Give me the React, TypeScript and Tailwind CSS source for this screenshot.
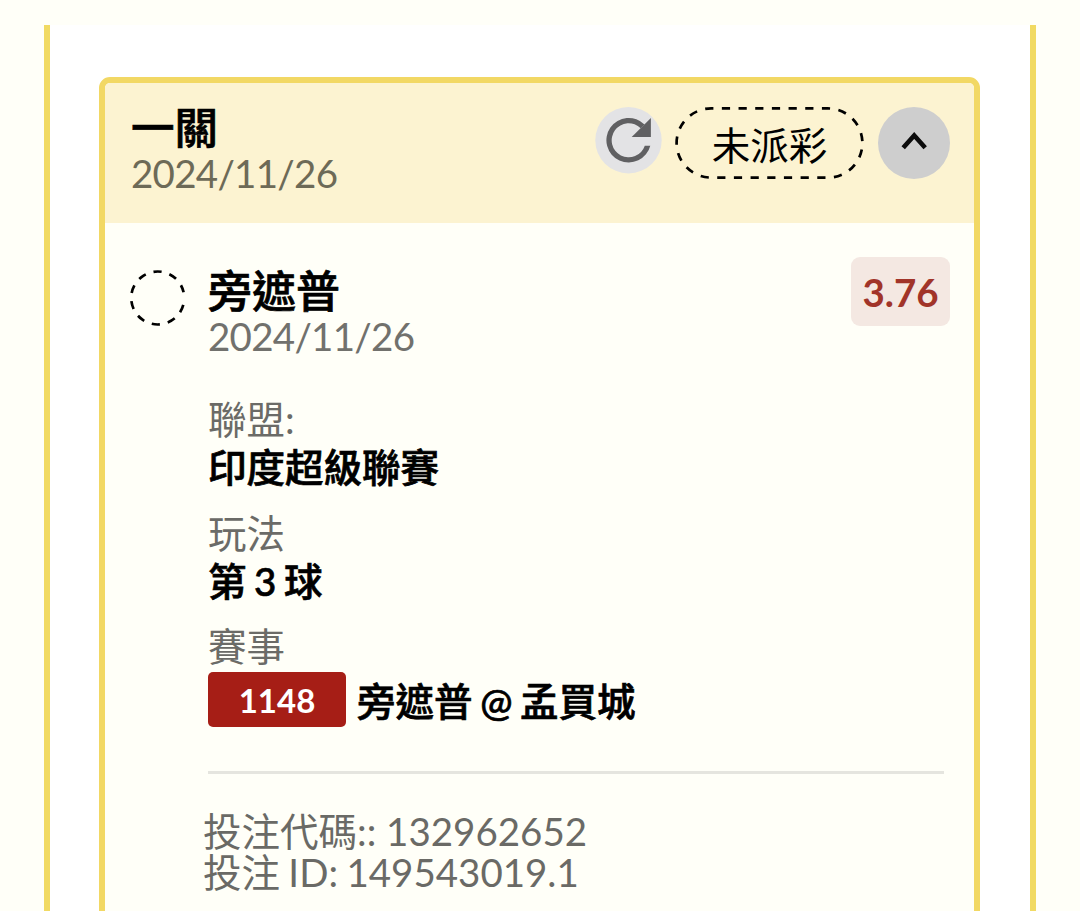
import { clsx } from 'clsx'
import type { ReactNode } from 'react'

interface BetLeg {
  code: string
  home: string
  away: string
  league: string
  market: string
  date: string
  odds: string
}

const leg: BetLeg = {
  code: '1148',
  home: '旁遮普',
  away: '孟買城',
  league: '印度超級聯賽',
  market: '第 3 球',
  date: '2024/11/26',
  odds: '3.76',
}

// sits between the medium and bold cuts of the CJK face
const semibold = 'font-medium [-webkit-text-stroke:0.7px_#000]'

function RefreshIcon() {
  return (
    <svg viewBox="0 0 67 67" className="h-[67px] w-[67px]">
      <circle cx="33.5" cy="33.2" r="33.2" fill="#e3e3e5" />
      <path
        d="M55.3 38.7A22.3 22.3 0 1 1 49.5 17.5L45.7 21.3A17 17 0 1 0 49.8 38.7Z"
        fill="#606062"
      />
      <path d="M55.9 11V30H36.7Z" fill="#606062" />
    </svg>
  )
}

function StatusPill({ children }: { children: ReactNode }) {
  return (
    <div className="relative flex h-[72px] w-[189px] items-center justify-center">
      <svg viewBox="0 0 189 72" className="absolute inset-0 h-full w-full" fill="none">
        <rect
          x="1.6"
          y="1.4"
          width="185.8"
          height="69.2"
          rx="34.6"
          pathLength="449.3"
          stroke="#000"
          strokeWidth="2.7"
          strokeDasharray="8.2 8.44"
          strokeDashoffset="6"
        />
      </svg>
      <span className="relative top-[2px] text-[38.5px] leading-[44px]">{children}</span>
    </div>
  )
}

function Detail({ label, children }: { label: string; children: ReactNode }) {
  return (
    <div className="h-[113.5px]">
      <p className="h-[48px] leading-[48px] text-[#6b6b67]">{label}</p>
      <div className={clsx('h-[48px] leading-[48px] text-black [word-spacing:-2.1px]', semibold)}>{children}</div>
    </div>
  )
}

export default function App() {
  return (
    <div className="h-[911px] overflow-hidden bg-[#fffff8] pt-[25px] pr-[44px] pl-[44px] font-['Lato','Noto_Sans_CJK_TC',sans-serif] text-[38.5px] text-black">
      <div className="h-[900px] border-x-[6px] border-[#f1da63] bg-white px-[49px] pt-[52px]">
        <section className="h-[860px] w-[881px] overflow-hidden rounded-[11px] border-[6px] border-[#f2d864] bg-[#fffff8]">
          <header className="flex h-[140px] items-start justify-between bg-[#fcf3d1] pt-[24px] pr-[24px] pl-[26px]">
            <div className="-mt-1">
              <h1 className={clsx('text-[43.5px] leading-[48px]', semibold)}>一關</h1>
              <p className="mt-px leading-[42px] tracking-[-0.72px] text-[#6d6a57]">{leg.date}</p>
            </div>
            <div className="flex">
              <RefreshIcon />
              <div className="ml-[13px]">
                <StatusPill>未派彩</StatusPill>
              </div>
              <button className="ml-[14px] h-[72px] w-[72px] rounded-full bg-[#cecece]">
                <svg viewBox="0 0 72 72" fill="none" stroke="#0c0c0c" strokeWidth="4.6">
                  <path d="M25.2 40.7 36.2 28.5 47.2 40.7" />
                </svg>
              </button>
            </div>
          </header>

          <div className="flex pt-[34px] pr-[24px] pl-[25px]">
            <svg viewBox="0 0 57 57" className="mt-[13px] h-[57px] w-[57px] shrink-0" fill="none">
              <path
                d="M53.3 34.9A26.5 26.5 0 1 1 53.6 22.3"
                stroke="#000"
                strokeWidth="2.7"
                strokeDasharray="8.1 8.1"
              />
            </svg>
            <div className="ml-[21px] flex-1">
              <div className="flex justify-between">
                <div className="pt-[10px]">
                  <h2 className={clsx('text-[44px] leading-[48px]', semibold)}>{leg.home}</h2>
                  <p className="leading-[42px] tracking-[-0.72px] text-[#71716d]">{leg.date}</p>
                </div>
                <div className="h-[69px] w-[99px] rounded-[9px] bg-[#f4e8e2] pt-px text-center leading-[69px] font-bold text-[#a13429]">
                  {leg.odds}
                </div>
              </div>

              <div className="mt-[38px]">
                <Detail label="聯盟:">{leg.league}</Detail>
                <Detail label="玩法">{leg.market}</Detail>
                <Detail label="賽事">
                  <div className="flex pt-[2px]">
                    <span className="h-[55px] w-[138px] rounded-[5px] bg-[#a61e16] text-center text-[33px] leading-[57px] font-bold text-white [-webkit-text-stroke:0px]">
                      {leg.code}
                    </span>
                    <span className="ml-[11px] leading-[58px]">
                      {leg.home} @ {leg.away}
                    </span>
                  </div>
                </Detail>
              </div>

              <div className="mt-[35px] mr-[6px] h-[3px] bg-[#e5e5df]" />

              <div className="mt-[37px] -ml-[5px] leading-[41.5px] text-[#6a6a66]">
                <p>投注代碼:: 132962652</p>
                <p className="[word-spacing:-1.5px]">投注 ID: 149543019.1</p>
              </div>
            </div>
          </div>
        </section>
      </div>
    </div>
  )
}
